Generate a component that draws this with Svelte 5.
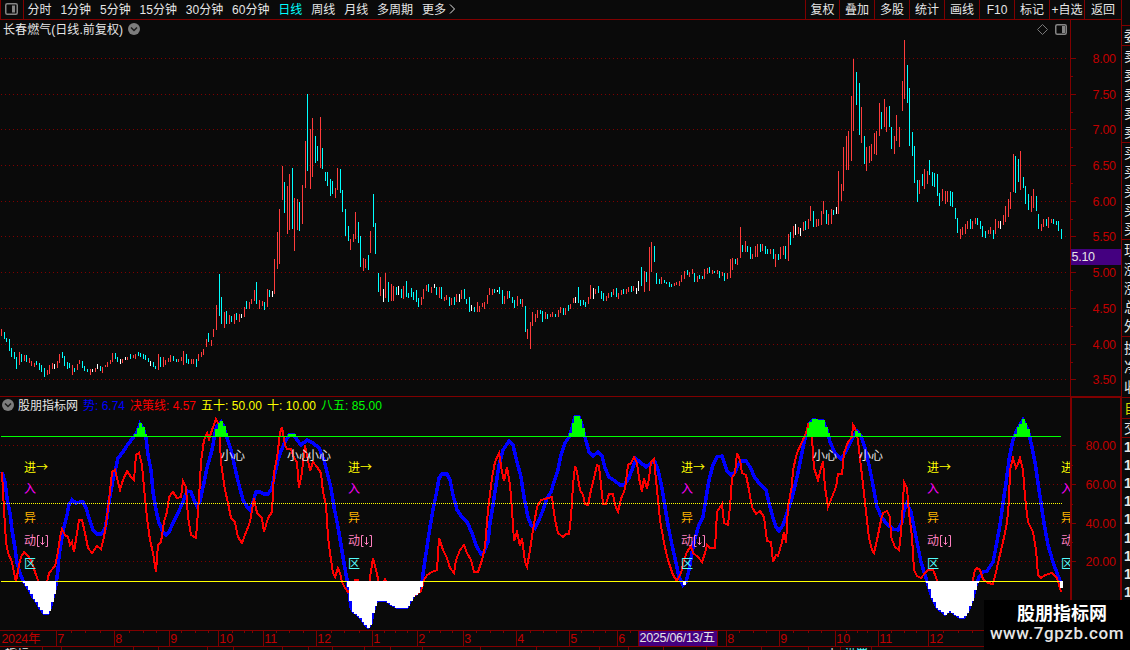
<script lang="ts">
	const periods = ['分时', '1分钟', '5分钟', '15分钟', '30分钟', '60分钟', '日线', '周线', '月线', '多周期', '更多'];
	const tools = ['复权', '叠加', '多股', '统计', '画线', 'F10', '标记', '+自选', '返回'];
	const sideGroups = [
		{ rows: ['委'], size: 'one' },
		{ rows: ['卖', '卖', '卖', '卖', '卖'], size: 'five' },
		{ rows: ['买', '买', '买', '买', '买'], size: 'five' },
		{ rows: ['现', '涨', '涨', '总', '外'], size: 'five' },
		{ rows: ['换', '净', '收'], size: 'three' },
		{ rows: ['自'], size: 'own' },
		{ rows: ['交'], size: 'trade' },
		{ rows: ['1', '1', '1', '1', '1', '1', '1', '1', '1'], size: 'ticks' },
	];

	// colour + x, high, low
	const bars = `
r1,329,336 c4,332,339 c6,338,342 c9,339,351 c11,348,357 c14,352,359 c16,357,369 r19,352,365 c21,354,362 r24,355,361
c26,355,362 r29,358,363 r31,361,366 r34,363,367 c36,361,365 c39,363,370 c41,365,372 c44,368,377 r47,370,375 r49,365,374
r52,363,369 w54,364,369 r57,361,368 r59,354,363 c62,352,358 c64,356,366 c67,362,369 c69,363,368 r72,365,375 c74,368,372
r77,364,370 r79,360,364 c82,361,368 c84,366,371 c87,369,372 r90,369,375 w92,369,372 r95,368,372 w97,364,369 c100,366,371
r102,367,373 r105,365,367 r107,362,367 r110,360,364 r112,353,362 c115,353,359 c117,357,362 w120,359,364 r122,359,363
w125,357,360 r127,357,360 c130,354,359 r133,355,358 r135,354,359 c138,352,356 c140,353,357 c143,354,359 c145,355,360
c148,358,362 w150,361,366 c153,362,367 c155,366,369 r158,354,370 c160,357,367 r163,357,367 r165,360,365 r168,358,362
r170,355,362 c173,356,361 c176,359,362 r178,359,362 r181,357,361 r183,351,365 c186,354,363 c188,359,364 r191,359,364
r193,359,364 c196,359,367 r198,354,361 r201,352,357 r203,349,355 r206,339,347 c208,333,342 r211,340,346 r213,329,337
r216,305,330 c219,274,316 c221,297,324 r224,312,328 c226,311,324 r229,315,324 c231,316,322 r234,314,324 c236,313,320
r239,314,322 w241,314,318 r244,307,317 c246,301,309 r249,302,309 r251,299,304 r254,290,301 c256,282,304 r259,300,309
r262,301,306 c264,302,310 r267,289,307 c269,290,297 w272,291,297 r274,259,294 r277,232,269 r279,209,264 r282,166,200
c284,182,213 r287,186,234 r289,174,230 c292,168,229 r294,198,251 r297,199,230 c299,202,231 r302,185,224 r305,141,188
c307,94,171 r310,129,189 r312,118,177 c315,136,163 c317,146,161 r320,117,168 c322,148,169 c325,172,181 c327,172,186
c330,179,196 c332,181,194 r335,188,198 r337,168,190 c340,169,193 c342,190,212 c345,209,236 c348,226,241 r350,239,250
r353,234,242 r355,212,239 c358,222,243 c360,236,267 r363,258,271 r365,259,268 c368,255,270 r370,231,253 c373,194,227
c375,223,254 c378,273,292 r380,277,296 w383,289,302 r385,273,298 c388,282,302 r391,284,301 r393,286,301 c396,287,295
w398,286,295 c401,289,298 r403,286,299 c406,281,297 c408,293,298 c411,288,297 c413,292,300 c416,290,302 c418,298,307
r421,297,305 r423,289,299 r426,285,291 c428,284,292 r431,287,293 w434,284,288 c436,287,295 r439,287,298 c441,287,299
r444,297,301 r446,295,300 c449,297,306 r451,298,305 c454,297,305 r456,294,302 w459,294,302 r461,290,299 c464,289,299
c466,299,304 c469,297,312 w471,305,311 c474,307,312 r477,302,312 r479,306,312 r482,303,307 r484,302,309 r487,295,304
r489,288,295 r492,289,295 c494,289,293 w497,290,292 c499,287,294 c502,290,304 r504,296,304 r507,291,299 c509,291,298
c512,297,303 c514,300,308 r517,296,306 c520,299,304 r522,299,307 c525,306,332 r527,329,339 r530,322,349 r532,312,326
r535,314,322 r537,310,318 c540,310,314 c542,311,322 r545,312,319 c547,314,319 r550,314,317 r552,312,317 c555,314,317
r558,310,317 r560,307,313 c563,308,315 r565,308,315 c568,305,311 r570,304,309 r573,298,303 w575,297,303 c578,287,303
c580,300,306 c583,300,305 c585,302,307 r588,297,304 r590,285,299 w593,288,299 r595,289,294 c598,286,293 c601,291,299
c603,293,301 r606,296,301 r608,293,298 c611,292,297 r613,289,295 c616,288,297 r618,293,299 r621,290,295 c623,289,294
r626,289,294 r628,287,292 c631,286,292 r633,286,291 w636,288,294 w638,281,291 c641,267,286 r644,271,292 c646,272,282
r649,247,291 r651,242,272 c654,246,262 c656,273,284 c659,279,284 r661,277,284 c664,280,283 c666,282,284 c669,282,287
c671,284,287 r674,283,286 r676,282,285 r679,281,286 r681,275,282 r684,271,279 c687,270,275 r689,272,277 r692,269,274
c694,273,282 r697,276,282 c699,275,279 c702,276,279 r704,269,279 r707,268,274 c709,267,273 r712,270,274 c714,271,273
r717,270,274 c719,271,278 r722,272,276 c724,273,281 r727,273,279 r730,259,278 r732,258,270 c735,259,264 r737,258,265
r740,227,258 c742,245,252 r745,241,252 c747,246,252 c750,247,259 r752,254,259 r755,246,257 r757,244,257 c760,244,252
r762,244,251 c765,246,254 c767,249,254 r770,249,254 c773,249,259 r775,254,267 c778,254,260 r780,247,259 r783,246,255
c785,246,259 r788,234,261 c790,232,245 r793,226,238 w795,224,235 r798,227,234 w800,228,236 r803,222,231 c805,221,230
r808,219,229 r810,206,221 c813,211,227 r816,219,227 r818,219,226 r821,211,225 r823,201,214 c826,210,224 r828,214,225
r831,209,224 c833,210,215 w836,207,214 r838,171,214 r841,184,201 r843,147,191 r846,136,170 r848,131,170 r851,96,161
r853,59,131 c856,72,105 c859,83,135 r861,107,143 c864,136,164 r866,147,171 r869,146,163 r871,144,161 r874,133,154
r876,131,155 r879,103,136 c881,112,129 r884,99,127 r886,107,132 c889,106,127 c891,127,149 r894,136,154 r896,115,141
r899,127,147 r902,81,111 r904,40,99 c907,65,103 c909,88,146 c912,132,156 c914,146,183 c917,180,202 r919,180,194
c922,174,186 r924,169,189 r927,171,184 c929,160,175 c932,172,186 c934,173,187 c937,174,196 c939,193,206 r942,189,201
r945,191,204 r947,191,202 c950,191,206 c952,192,207 c955,208,219 c957,218,233 r960,229,239 r962,227,235 r965,224,234
r967,221,229 c970,219,229 r972,221,229 r975,218,224 c977,218,225 c980,221,229 c982,226,237 c985,231,238 r988,230,234
r990,227,234 c993,230,239 r995,219,234 r998,221,228 w1000,221,229 r1003,215,225 r1005,206,222 r1008,199,217 r1010,192,209
r1013,154,192 c1015,156,193 c1018,159,182 r1020,151,190 c1023,177,188 c1025,186,204 c1028,194,210 r1031,196,212
r1033,189,208 c1036,196,211 c1038,214,229 r1041,224,231 r1043,219,227 c1046,219,226 r1048,217,228 r1051,219,223
c1053,219,224 c1056,221,225 c1058,221,231 c1061,229,239`
		.trim()
		.split(/\s+/)
		.map((s) => {
			const [x, top, bottom] = s.slice(1).split(',').map(Number);
			return { tone: s[0], x, top, bottom };
		});

	const trend = `2,472 5,482 7,498 10,513 12,530 15,548 17,563 20,573 23,581 27,586 30,591 33,597 37,602 40,608 44,613 48,613
51,605 53,597 56,585 58,570 59,555 62,538 64,527 67,515 69,505 72,500 76,503 80,502 83,502 86,508 89,518 93,530 97,534
101,534 105,529 107,518 109,502 113,480 116,467 118,458 123,452 128,444 133,438 137,432 140,424 143,428 146,438 148,455
151,470 153,492 156,510 159,523 163,532 166,535 169,532 173,523 178,513 183,502 187,491 191,492 194,500 197,506 200,501
203,487 207,468 212,450 215,433 217,426 221,422 224,427 227,438 231,450 235,468 239,485 243,500 247,507 250,510 253,502
256,492 260,492 264,494 268,494 272,488 275,473 278,460 281,451 285,442 289,435 294,435 297,440 301,445 307,440 313,443
319,448 324,460 327,472 331,488 334,507 338,527 341,545 344,563 347,580 349,592 351,607 353,611 358,615 362,619 365,624
368,627 371,623 373,612 376,602 378,600 386,600 391,604 397,607 407,607 409,603 413,596 417,593 420,590 422,582 424,567
427,547 430,527 433,510 437,490 439,478 442,474 447,474 450,480 453,495 457,510 462,517 467,522 472,533 476,545 481,554
484,552 488,542 490,523 493,505 496,485 499,465 503,450 509,441 513,445 517,462 521,477 524,497 528,517 531,525 535,528
539,520 543,510 547,498 551,492 554,482 558,470 561,455 565,443 569,437 572,428 575,417 579,417 582,425 585,437 589,452
593,456 598,452 602,456 605,468 609,477 615,481 620,485 624,485 629,478 633,467 636,459 640,462 646,467 651,463 655,462
658,470 662,488 665,507 668,525 672,545 676,563 679,577 683,585 686,582 689,570 692,553 695,538 699,525 703,517 706,498
709,480 713,465 717,457 722,456 724,462 727,471 731,475 735,472 738,465 741,461 746,461 750,467 755,478 760,484 766,490
769,503 773,518 776,527 779,531 783,525 787,513 792,498 797,477 801,458 804,443 807,432 810,423 813,420 823,421 827,430
830,442 835,453 841,459 845,453 850,443 854,435 857,431 861,436 865,448 869,465 873,485 877,507 882,518 887,524 893,529
898,530 902,522 904,510 907,503 911,512 914,527 918,547 921,562 925,575 928,585 932,597 937,607 945,614 950,610 955,614
960,617 964,617 969,608 973,597 976,585 979,577 983,572 987,571 993,562 996,547 1000,525 1003,503 1006,483 1009,460
1013,440 1017,430 1023,420 1028,430 1031,443 1035,462 1038,483 1041,503 1044,523 1048,545 1053,562 1057,573 1061,583`;

	const decision = `2,472 4,510 6,542 8,553 12,562 14,573 16,582 19,565 21,557 24,552 28,556 32,562 35,572 38,580 41,586 46,586
48,578 49,573 55,566 58,552 60,537 62,529 65,535 68,537 70,545 72,542 74,552 77,533 79,520 82,520 85,533 88,548 92,553
97,546 101,549 104,537 108,510 112,472 115,470 117,478 120,490 123,480 127,471 131,477 134,480 136,455 139,453 142,465
144,488 147,518 150,540 153,553 156,572 158,545 161,542 164,522 167,512 169,497 173,492 177,498 181,497 183,481 186,487
188,517 191,535 196,538 199,498 201,462 204,440 207,433 209,439 212,430 216,419 219,425 221,462 225,490 228,503 231,518
235,522 238,537 242,543 245,535 250,522 254,498 257,513 262,518 264,532 268,518 272,512 274,472 277,458 280,433 282,427
285,445 287,449 291,449 294,458 297,462 299,488 302,472 305,445 308,460 310,471 313,462 317,467 321,473 323,492 326,505
328,537 330,553 333,573 335,577 338,568 340,573 342,582 345,588 348,592 353,586 355,580 358,580 361,586 369,584 373,558
376,570 379,583 383,583 385,579 388,585 405,598 417,594 421,591 424,580 427,575 432,572 437,570 439,538 443,550 447,558
450,568 454,573 456,560 460,550 464,545 467,553 471,560 474,572 478,572 482,560 485,547 488,510 492,478 495,462 499,453
502,472 504,481 507,467 510,485 512,510 514,541 517,532 520,546 522,538 525,562 527,567 530,550 533,530 537,507 541,500
552,497 555,520 558,533 563,537 566,534 569,534 571,517 573,485 575,466 577,472 580,490 583,495 585,504 588,505 591,490
594,478 597,465 599,466 601,485 603,504 606,504 609,494 613,494 615,505 618,512 621,499 625,489 628,465 631,463 634,457
637,463 639,478 642,492 644,478 647,489 649,478 651,462 654,459 657,490 660,520 664,543 668,560 673,575 677,581 681,573
684,560 687,552 691,546 693,553 698,557 702,562 705,553 707,545 710,548 715,548 717,512 722,504 724,523 728,525 730,507
732,478 735,473 737,453 740,460 742,473 746,475 749,490 752,507 756,514 760,511 764,517 767,541 771,542 773,562 776,555
778,556 782,542 784,532 786,543 788,507 792,485 793,470 797,453 802,442 806,433 808,425 812,438 814,468 818,480 821,468
823,461 825,487 828,507 832,497 836,487 838,474 842,474 844,453 848,442 852,437 853,425 855,428 858,440 861,467 864,493
867,520 869,538 872,550 874,553 877,540 881,520 883,513 887,511 890,517 891,537 895,547 899,550 901,533 903,503 904,482
907,488 909,513 912,537 914,570 917,576 921,578 925,573 928,570 933,570 936,577 938,584 972,584 975,570 977,568 980,570
983,579 988,583 993,584 996,572 998,563 1003,542 1007,523 1009,500 1010,470 1013,458 1016,468 1018,464 1020,458 1023,470
1025,497 1028,522 1033,532 1036,550 1038,575 1041,578 1045,575 1052,573 1057,578 1061,592`;

	const trendPoints = trend.split(/\s+/).map((p) => p.split(',').map(Number));

	function trendAt(x: number) {
		const i = Math.max(1, trendPoints.findIndex((p) => p[0] >= x));
		const [x0, y0] = trendPoints[i - 1];
		const [x1, y1] = trendPoints[i];
		return y0 + ((y1 - y0) * (x - x0)) / (x1 - x0);
	}

	// one column per trading day, so the filled areas get stepped edges
	const columns = bars.slice(1).map(({ x }) => ({ x: x - 1, y: Math.round(trendAt(x)) }));
	const overbought = columns.filter((c) => c.y < 436);
	const oversold = columns.filter((c) => c.y > 581);

	const prices = [58, 94, 129, 165, 201, 236, 272, 308, 344, 379].map((y, i) => ({ y, text: (8 - i * 0.5).toFixed(2) }));
	const levels = [445, 484, 523, 561].map((y, i) => ({ y, text: (80 - i * 20).toFixed(2) }));
	const minorRows = [76, 112, 147, 183, 219, 254, 290, 326, 362, 465, 504, 542];

	const months = [
		[56, '7'], [114, '8'], [169, '9'], [218, '10'], [263, '11'], [316, '12'], [372, '1'], [417, '2'], [463, '3'],
		[516, '4'], [569, '5'], [617, '6'], [726, '8'], [779, '9'], [835, '10'], [878, '11'], [928, '12'],
	] as [number, string][];
	const weekTicks = [
		71, 85, 100, 129, 143, 156, 181, 195, 208, 232, 244, 252, 276, 289, 303, 331, 344, 359, 384, 395, 407, 429, 440,
		452, 476, 490, 503, 530, 543, 556, 581, 593, 605, 630, 739, 753, 766, 793, 808, 821, 846, 857, 867, 891, 904, 916,
		943, 958, 972,
	];
	const footTicks = [42, 61, 133, 158, 207, 233, 282, 308, 332, 364, 390, 422, 480, 536, 599, 628, 663, 706, 761, 808, 840, 871];

	const entries = [24, 348, 681, 927, 1061];
	const warnings = [221, 287, 307, 813, 859];
</script>

<div class="terminal">
	<header class="toolbar">
		<div class="panel-toggle">
			<svg width="13" height="12" viewBox="0 0 13 12">
				<rect x="0.75" y="0.75" width="11.5" height="10.5" rx="1.5" fill="none" stroke="#858585" stroke-width="1.5" />
				<rect x="7" y="2.5" width="3" height="7" fill="#858585" />
			</svg>
		</div>
		<nav class="periods">
			{#each periods as period}
				<span class:active={period === '日线'}>{period}</span>
			{/each}
			<svg class="more" width="7" height="10" viewBox="0 0 7 10">
				<path d="M1 0.5L5.5 5L1 9.5" fill="none" stroke="#e6e6e6" />
			</svg>
		</nav>
		<div class="tools">
			{#each tools as tool}
				<span>{tool}</span>
			{/each}
		</div>
		<div class="toolbar-end"></div>
	</header>

	<main class="body">
		<svg class="chart" width="1122" height="630" viewBox="0 20 1122 630">
			<defs>
				<clipPath id="plot"><rect x="0" y="397" width="1070" height="233" /></clipPath>
				<clipPath id="foot"><rect x="0" y="648" width="1070" height="2" /></clipPath>
			</defs>

			<text x="3" y="34" textLength="120" class="ui">长春燃气(日线.前复权)</text>
			<circle cx="134" cy="29" r="6" fill="#7d7d7d" />
			<path d="M131 27.5L134 30.5L137 27.5" class="chevron" />
			<path d="M1042.5 24.5L1047.5 29.5L1042.5 34.5L1037.5 29.5Z" fill="none" stroke="#787878" />
			<rect x="1055.75" y="24.75" width="10.5" height="9.5" rx="1.5" fill="none" stroke="#858585" stroke-width="1.5" />
			<rect x="1062" y="26" width="3" height="7" fill="#858585" />

			<g class="grid">
				{#each [...prices, ...levels] as row}
					<path d="M1 {row.y + 0.5}H1067" />
				{/each}
			</g>

			<g shape-rendering="crispEdges">
				{#each bars as bar}
					<rect x={bar.x} y={bar.top} width="1" height={bar.bottom - bar.top} class={bar.tone} />
				{/each}
			</g>

			<g class="frame">
				<path d="M1070.5 20V396M1121.5 20V650M0 396.5H1122M0 630.5H1070M0 646.5H1070" />
				<path d="M1071 650V397H1121V650" class="thick" />
				{#each [...prices, ...levels] as row}
					<path d="M1071 {row.y + 0.5}H1076" />
				{/each}
				{#each minorRows as y}
					<path d="M1071 {y + 0.5}H1073" />
				{/each}
				{#each months as [x]}
					<path d="M{x + 0.5} 631V646" />
				{/each}
				{#each weekTicks as x}
					<path d="M{x + 0.5} 631V633" />
				{/each}
				{#each footTicks as x}
					<path d="M{x + 0.5} 647V650" />
				{/each}
			</g>

			<g class="scale">
				{#each prices as row}
					<text x="1092.5" y={row.y + 5} textLength="23.5">{row.text}</text>
				{/each}
				{#each levels as row}
					<text x="1085.5" y={row.y + 5} textLength="30.5">{row.text}</text>
				{/each}
				<text x="1.5" y="643" textLength="39">2024年</text>
				{#each months as [x, name]}
					<text x={x + 1.3} y="643">{name}</text>
				{/each}
			</g>

			<rect x="1071" y="249" width="50" height="16" fill="#440080" />
			<text x="1071.5" y="261" textLength="23.5" class="tag">5.10</text>
			<rect x="639" y="631" width="78" height="15" fill="#440080" />
			<path d="M638.5 631V646M717.5 631V646" stroke="#800000" shape-rendering="crispEdges" />
			<text x="639.5" y="642" textLength="75.5" class="tag">2025/06/13/五</text>

			<circle cx="8" cy="405" r="6" fill="#7d7d7d" />
			<path d="M5 403.5L8 406.5L11 403.5" class="chevron" />
			<text x="18" y="409.5" textLength="60" class="ui">股朋指标网</text>
			<text x="83" y="409.5" textLength="42" class="ui blue">势: 6.74</text>
			<text x="130" y="409.5" textLength="66" class="ui red">决策线: 4.57</text>
			<text x="201" y="409.5" textLength="61" class="ui yellow">五十: 50.00</text>
			<text x="267" y="409.5" textLength="49" class="ui yellow">十: 10.00</text>
			<text x="321" y="409.5" textLength="61" class="ui green">八五: 85.00</text>

			<g shape-rendering="crispEdges" fill="none">
				<polyline points={trend} stroke="#0000ff" stroke-width="3.5" />
				<polyline points={decision} stroke="#ff0000" stroke-width="2" />
				<path d="M1 503.5H1062" stroke="#ffff00" stroke-dasharray="1 1" />
				<path d="M1 581.5H1061" stroke="#ffff00" />
				<path d="M1 436.5H1061" stroke="#00ff00" />
				{#each overbought as { x, y }}
					<rect {x} y={y - 1} width="3" height={438 - y} fill="#00ff00" />
				{/each}
				{#each oversold as { x, y }}
					<rect {x} y="581" width="3" height={y - 580} fill="#ffffff" />
				{/each}
				<rect x="1060" y="581" width="3" height="7" fill="#ffffff" />
			</g>

			<g clip-path="url(#plot)">
				{#each entries as x}
					<text {x} y="472" class="ui yellow">进</text>
					<text x={x + 12} y="472" class="ui arrow yellow">→</text>
					<text {x} y="493" class="ui magenta">入</text>
					<text {x} y="522" class="ui orange">异</text>
					<text {x} y="545" class="ui pink">动</text>
					<path d="M{x + 15.5} 535.5H{x + 13.5}V546.5H{x + 15.5}M{x + 18.5} 537V544.5M{x + 16.5} 542.5L{x + 18.5} 544.5L{x + 20.5} 542.5M{x + 21.5} 535.5H{x + 23.5}V546.5H{x + 21.5}" fill="none" stroke="#ff80c0" />
					<text {x} y="568" class="ui cyan">区</text>
				{/each}
				{#each warnings as x}
					<text {x} y="460" textLength="24" class="ui">小心</text>
				{/each}
			</g>

			<g clip-path="url(#foot)">
				<text x="5" y="658" class="ui">指标 、</text>
				<text x="826" y="658" class="ui">小</text>
				<text x="844" y="658" class="ui cyan">设置</text>
			</g>
		</svg>

		<aside class="quotes">
			{#each sideGroups as group}
				<div class="group {group.size}">
					{#each group.rows as row}
						<span>{row}</span>
					{/each}
				</div>
			{/each}
		</aside>
	</main>

	<div class="watermark">
		<strong>股朋指标网</strong>
		<span>www.7gpzb.com</span>
	</div>
</div>

<style>
	:global(body) {
		background: #0a0a0a;
	}

	.terminal {
		position: relative;
		width: 1130px;
		height: 650px;
		overflow: hidden;
		background: #0a0a0a;
		color: #e6e6e6;
		font: 12px 'Liberation Sans', 'Noto Sans CJK SC', sans-serif;
	}

	.toolbar {
		display: flex;
		box-sizing: border-box;
		height: 20px;
		line-height: 20px;
	}

	.toolbar > * {
		box-sizing: border-box;
		height: 20px;
		border-bottom: 1px solid #800000;
	}

	.panel-toggle {
		width: 24px;
		padding: 3px 0 0 4px;
		border-left: 1px solid #800000;
		border-right: 1px solid #800000;
		line-height: 0;
	}

	.periods {
		display: flex;
		flex: 1;
		gap: 8.9px;
		padding-left: 3.5px;
		white-space: nowrap;
	}

	.periods .active {
		color: #00ffff;
	}

	.more {
		margin: 4px 0 0 -6px;
	}

	.tools {
		display: flex;
	}

	.tools span {
		box-sizing: border-box;
		width: 35px;
		height: 19px;
		border-left: 1px solid #800000;
		text-align: center;
		white-space: nowrap;
	}

	.tools span:first-child {
		width: 34px;
	}

	.tools span:last-child {
		width: 37px;
	}

	.toolbar .toolbar-end {
		width: 9px;
		border-left: 1px solid #800000;
		border-bottom: 0;
	}

	.body {
		display: flex;
	}

	.chart {
		display: block;
		flex: none;
	}

	.ui {
		font-size: 12px;
		fill: #e6e6e6;
	}

	.arrow {
		font-family: 'Noto Sans CJK SC', sans-serif;
	}

	.r {
		fill: #ff3c3c;
	}

	.c {
		fill: #00ffff;
	}

	.w {
		fill: #ffffff;
	}

	.blue {
		fill: #0000ff;
	}

	.red {
		fill: #ff0000;
	}

	.yellow {
		fill: #ffff00;
	}

	.green {
		fill: #00ff00;
	}

	.magenta {
		fill: #ff00ff;
	}

	.orange {
		fill: #ffb400;
	}

	.pink {
		fill: #ff80c0;
	}

	.cyan {
		fill: #54fcfc;
	}

	.chevron {
		fill: none;
		stroke: #1c1c1c;
		stroke-width: 1.5;
	}

	.grid path {
		stroke: #800000;
		stroke-dasharray: 1 3;
		shape-rendering: crispEdges;
	}

	.frame path {
		fill: none;
		stroke: #800000;
		shape-rendering: crispEdges;
	}

	.frame .thick {
		stroke-width: 2;
	}

	.scale text {
		fill: #c00000;
		font-size: 12.5px;
	}

	.tag {
		fill: #e6e6e6;
		font-size: 12.5px;
	}

	.quotes {
		box-sizing: border-box;
		width: 8px;
		height: 630px;
		padding-top: 5px;
		overflow: hidden;
		font-size: 14px;
	}

	.group {
		display: flex;
		box-sizing: border-box;
		flex-direction: column;
		justify-content: space-evenly;
		padding-left: 2px;
		border-top: 1px solid #800000;
	}

	.group span {
		width: 16px;
		line-height: 18px;
	}

	.one {
		height: 20px;
	}

	.five {
		height: 97px;
	}

	.three {
		height: 61px;
	}

	.own {
		height: 21px;
		color: #d8d800;
	}

	.trade {
		height: 19px;
	}

	.ticks {
		height: 164px;
		font-weight: 700;
	}

	.watermark {
		position: absolute;
		right: 0;
		bottom: 0;
		box-sizing: border-box;
		width: 146px;
		height: 50px;
		padding-top: 3px;
		background: #000;
		text-align: center;
	}

	.watermark strong {
		display: block;
		padding-left: 10px;
		color: #fff;
		font-size: 18px;
		line-height: 22px;
	}

	.watermark span {
		display: block;
		font: 500 17px/17px Roboto, sans-serif;
		letter-spacing: 0.6px;
	}
</style>
